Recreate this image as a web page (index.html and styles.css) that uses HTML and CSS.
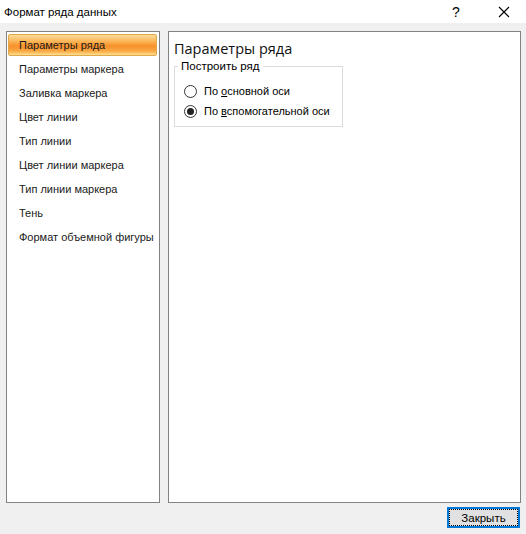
FILE: index.html
```html
<!DOCTYPE html>
<html lang="ru">
<head>
    <meta charset="UTF-8" />
    <title>Формат ряда данных</title>
    <link rel="stylesheet" href="styles.css">
</head>
<body>

<div class="dialog">

    <!-- Title bar -->
    <div class="titlebar">
        <span class="title">Формат ряда данных</span>
        <span class="help">?</span>
        <span class="close">
            <svg width="12" height="12" viewBox="0 0 12 12"><path d="M1 1 L11 11 M11 1 L1 11" stroke="#000" stroke-width="1.1" fill="none"/></svg>
        </span>
    </div>

    <div class="main">
        <!-- Category list -->
        <div class="sidebar">
            <div class="item selected">Параметры ряда</div>
            <div class="item">Параметры маркера</div>
            <div class="item">Заливка маркера</div>
            <div class="item">Цвет линии</div>
            <div class="item">Тип линии</div>
            <div class="item">Цвет линии маркера</div>
            <div class="item">Тип линии маркера</div>
            <div class="item">Тень</div>
            <div class="item">Формат объемной фигуры</div>
        </div>

        <!-- Settings page -->
        <div class="content">
            <h2 class="page-title">Параметры ряда</h2>
            <fieldset class="group">
                <legend>Построить ряд</legend>
                <label class="radio"><span class="dot"></span><span>По <u>о</u>сновной оси</span></label>
                <label class="radio"><span class="dot checked"></span><span>По <u>в</u>спомогательной оси</span></label>
            </fieldset>
        </div>
    </div>

    <div class="footer">
        <button class="btn">Закрыть</button>
    </div>

</div>

</body>
</html>
```

FILE: styles.css
```css
* {
  box-sizing: border-box;
  margin: 0;
  padding: 0;
}

body {
  background: #f0f0f0;
  font-family: 'Liberation Sans', Arial, sans-serif;
  font-size: 11px;
  color: #000;
}

.dialog {
  width: 526px;
  height: 534px;
}

.titlebar {
  height: 23px;
  background: #fff;
  display: flex;
  align-items: center;
  padding-left: 4px;
  font-size: 11.5px;
}

.title {
  flex: 1;
}

.help {
  width: 14px;
  margin-right: 35px;
  font-size: 14px;
  text-align: center;
}

.close {
  width: 14px;
  margin-right: 14px;
  display: flex;
}

.main {
  display: flex;
  gap: 8px;
  padding: 8px 5px 0 6px;
}

.sidebar {
  width: 154px;
  height: 472px;
  background: #fff;
  border: 1px solid #828282;
  padding: 2px 2px 0 1px;
}

.item {
  height: 24px;
  line-height: 22px;
  padding-left: 11px;
  white-space: nowrap;
  color: #1a1a1a;
}

.item.selected {
  height: 22px;
  margin-bottom: 2px;
  border: 1px solid #e0a84c;
  border-radius: 2px;
  line-height: 20px;
  padding-left: 10px;
  background: linear-gradient(to bottom, #fddc98 0%, #fbb85a 30%, #f8902a 55%, #faa843 80%, #fde08f 100%);
}

.content {
  flex: 1;
  height: 472px;
  background: #fff;
  border: 1px solid #828282;
  padding: 8px 5px;
}

.page-title {
  font-family: 'Open Sans', 'Liberation Sans', sans-serif;
  font-weight: normal;
  font-size: 14.5px;
  line-height: 18px;
  margin-bottom: 2px;
  color: #111;
}

.group {
  width: 169px;
  border: 1px solid #dcdcdc;
  padding: 9px 0 5px 9px;
}

.group legend {
  margin-left: -6px;
  padding: 0 3px;
  font-size: 11.5px;
}

.radio {
  display: flex;
  align-items: center;
  height: 20px;
  gap: 7px;
  font-size: 11px;
  white-space: nowrap;
}

.dot {
  flex: none;
  width: 13px;
  height: 13px;
  border: 1px solid #333;
  border-radius: 50%;
  background: #fff;
  position: relative;
}

.dot.checked::after {
  content: "";
  position: absolute;
  left: 2px;
  top: 2px;
  width: 7px;
  height: 7px;
  border-radius: 50%;
  background: #222;
}

.footer {
  display: flex;
  justify-content: flex-end;
  padding: 4px 6px 0 0;
}

.btn {
  width: 73px;
  height: 21px;
  font-family: 'Liberation Sans', Arial, sans-serif;
  font-size: 11.5px;
  background: #e1e1e1;
  border: 1px solid #0078d7;
  outline: 1px dotted #000;
  outline-offset: -3px;
  box-shadow: inset 0 0 0 1px #0078d7;
}
```
